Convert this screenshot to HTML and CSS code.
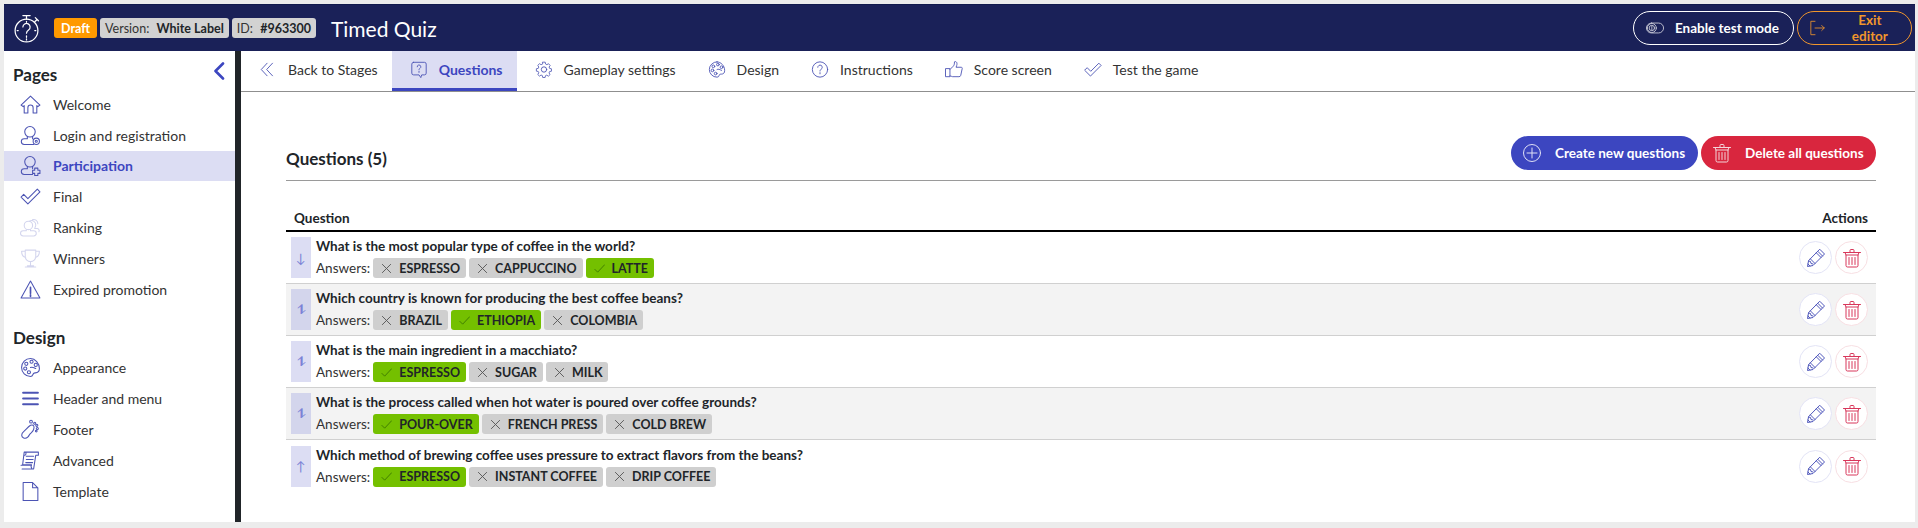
FILE: index.html
```html
<!DOCTYPE html>
<html lang="en">
<head>
<meta charset="utf-8">
<title>Timed Quiz</title>
<link rel="stylesheet" href="styles.css">
</head>
<body>
<svg class="defs" width="0" height="0" aria-hidden="true">
  <defs>
    <symbol id="i-home" viewBox="0 0 20 20"><path d="M1 10.5 10 2l9 8.5-2 1.5-1-1v7h-3.500v-5a2.500 2.500 0 0 0-5 0v5H4v-7l-1 1z"/></symbol>
    <symbol id="i-user" viewBox="0 0 20 20"><circle cx="9.500" cy="6.500" r="5"/><path d="M7 11v2H4a2.500 2.500 0 0 0 0 5.500h9M12 11v2"/><circle cx="15.500" cy="15.500" r="3"/><circle cx="15.500" cy="15.500" r="1"/></symbol>
    <symbol id="i-userp" viewBox="0 0 20 20"><circle cx="9.500" cy="6.500" r="5"/><path d="M7 11v2H4a2.500 2.500 0 0 0 0 5.500h8M12 11v2"/><path d="M14 12.500h3v2h2v3h-2v2h-3v-2h-2v-3h2z"/></symbol>
    <symbol id="i-check" viewBox="0 0 20 20"><path d="M1 10.500 3.500 8l4 4L16.500 3 19 5.500 7.500 17z"/></symbol>
    <symbol id="i-rank" viewBox="0 0 20 20"><circle cx="8" cy="8" r="4"/><path d="M6 12v1H3a2.500 2.500 0 0 0 0 5h10a2.500 2.500 0 0 0 0-5h-3v-1M9 4a4 4 0 0 1 6 4l-1 3h2a2 2 0 0 1 2 3M12 2.500a4 4 0 0 1 5 4"/></symbol>
    <symbol id="i-trophy" viewBox="0 0 20 20"><path d="M5 2h10v6a5 5 0 0 1-10 0zM5 3H1.500c0 4 1.500 5.500 4 6M15 3h3.500c0 4-1.500 5.500-4 6M10 13v4M5 18h10M7 17h6"/></symbol>
    <symbol id="i-warn" viewBox="0 0 20 20"><path d="M10 2 19 18H1z"/><path d="M10 8v5.500M10 15v1.500" stroke-width="1.600"/></symbol>
    <symbol id="i-palette" viewBox="0 0 20 20"><path d="M10 1.500a8.500 8.500 0 1 0 0 17c2.500 0 2-2 3-3s5.500 1 5.500-4.500c0-5-4-9.500-8.500-9.500z"/><circle cx="6" cy="6.500" r="1.500"/><circle cx="11" cy="4.500" r="1.500"/><circle cx="15" cy="7.500" r="1.500"/><circle cx="5" cy="11" r="1.500"/><circle cx="8.500" cy="14.500" r="1.500"/><path d="M10 10c1.500-1 3 0 5 1"/></symbol>
    <symbol id="i-foot" viewBox="0 0 20 20"><path d="M10 6c3-1 4 1 3 4s-3 3-4 5-3 4-5.500 3S1 14 3.500 12 7 8 10 6z"/><circle cx="10.500" cy="2.500" r="1.300"/><circle cx="14" cy="4" r="1"/><circle cx="16" cy="6" r="1"/><circle cx="16.500" cy="9" r="1"/><circle cx="15.500" cy="11.500" r=".8"/></symbol>
    <symbol id="i-scroll" viewBox="0 0 20 20"><path d="M4 2h13.500v3H15l-2 13H2M4 2l-1.500 12H11l-.5 2 1 2M1 14.500h9.500M5 2c1 0 1 3-.5 3M6 6h7M6 9h6.500M5.500 12h6.500"/></symbol>
    <symbol id="i-file" viewBox="0 0 20 20"><path d="M3 1.500h9l5 5v12H3zM12 1.500v5h5"/></symbol>
    <symbol id="i-bubble" viewBox="0 0 20 20"><path d="M4 2h12a2 2 0 0 1 2 2v10a2 2 0 0 1-2 2h-3l-1 3-2-3H4a2 2 0 0 1-2-2V4a2 2 0 0 1 2-2z"/><path d="M8 7a2 2 0 1 1 3 1.700c-.6.400-1 .8-1 1.600M10 12v1.200"/></symbol>
    <symbol id="i-gear" viewBox="0 0 20 20"><path d="M8.500 1.500h3l.4 2.300 1.700.8 2-1.200 2 2.200-1.300 1.900.6 1.700 2.300.5v3l-2.300.4-.7 1.700 1.300 2-2.100 2-2-1.300-1.600.7-.4 2.200h-3l-.4-2.300-1.600-.7-2 1.300-2.100-2 1.300-2-.7-1.700-2.300-.4v-3l2.300-.4.7-1.700-1.300-2 2.100-2.100 2 1.200 1.600-.7z" transform="matrix(.9 0 0 .9 1 .5)"/><circle cx="10" cy="10" r="3"/></symbol>
    <symbol id="i-q" viewBox="0 0 20 20"><circle cx="10" cy="10" r="8.500"/><path d="M7.500 7.500a2.500 2.500 0 1 1 3.800 2.200c-.8.500-1.300 1-1.300 2M10 13.500v1.300"/></symbol>
    <symbol id="i-thumb" viewBox="0 0 20 20"><path d="M1 9h4.500v9H1zM5.500 10 9 6.500c1.500-1.500 1.500-3 1.500-5 2-1 3.500 1 2.500 4l-.7 2H18c1 0 1.500 1 1 2l-1.500 7c-.2 1-1 1.500-2 1.500h-7c-1 0-2-1-3-1"/></symbol>
    <symbol id="i-pencil" viewBox="0 0 20 20"><path d="M14 1.500 18.500 6 7 17.500l-5.500 1L2.500 13zM12 3.500 16.500 8M10.500 5l4.500 4.500M4.500 11l4.500 4.500M2.500 13l2 .5.500 2 2 .5M2 16l2 2"/></symbol>
    <symbol id="i-trash" viewBox="0 0 20 20"><path d="M1.500 4.500h17M8 4.500V2.500a1 1 0 0 1 1-1h2a1 1 0 0 1 1 1v2M3 4.500 4 7v10.500a1.500 1.500 0 0 0 1.500 1.500h9a1.500 1.500 0 0 0 1.500-1.500V7l1-2.500M4 7h12M7 9.500v7M10 9.500v7M13 9.500v7" /></symbol>
    <symbol id="i-x" viewBox="0 0 12 12"><path d="M1.500 1.500l9 9M10.500 1.500l-9 9"/></symbol>
    <symbol id="i-tick" viewBox="0 0 12 12"><path d="M1 7l3 3 7.500-8"/></symbol>
  </defs>
</svg>
<div class="app">
  <header class="topbar">
    <svg class="logo" viewBox="0 0 28 28"><circle cx="14" cy="16" r="11"/><path d="M14 5V2M10.500 1.500h7M22 7.500l2-2M22.500 3.500l3 3M10.500 12.500a3.500 3.500 0 1 1 5.500 3c-1.200.8-2 1.400-2 3M14 21v1.500M14 7v1M14 24v1M5 16h1M22 16h1"/></svg>
    <span class="badge badge-draft">Draft</span>
    <span class="badge">Version: <b>White Label</b></span>
    <span class="badge">ID: <b>#963300</b></span>
    <h1 class="quiz-title">Timed Quiz</h1>
    <div class="top-actions">
      <button class="pill pill-white">
        <svg class="pill-icon" viewBox="0 0 20 12"><rect x=".5" y=".5" width="19" height="11" rx="5.500"/><circle cx="6.500" cy="6" r="5"/><circle cx="6.500" cy="6" r="3"/><path d="M6.500 4v4"/></svg>
        Enable test mode
      </button>
      <button class="pill pill-orange">
        <svg class="pill-icon" viewBox="0 0 20 18"><path d="M6 1H1v16h5M6 9h11M14 6l3 3-3 3"/></svg>
        Exit editor
      </button>
    </div>
  </header>
  <div class="workspace">
    <aside class="sidebar">
      <div class="side-head"><h2 class="side-title">Pages</h2>
        <svg class="collapse" viewBox="0 0 12 18"><path d="M10 1.500 2.500 9l7.500 7.500"/></svg>
      </div>
      <nav class="side-list">
        <a class="side-item"><svg class="ico"><use href="#i-home"/></svg>Welcome</a>
        <a class="side-item"><svg class="ico"><use href="#i-user"/></svg>Login and registration</a>
        <a class="side-item is-active"><svg class="ico"><use href="#i-userp"/></svg>Participation</a>
        <a class="side-item"><svg class="ico"><use href="#i-check"/></svg>Final</a>
        <a class="side-item"><svg class="ico ico-pale"><use href="#i-rank"/></svg>Ranking</a>
        <a class="side-item"><svg class="ico ico-pale"><use href="#i-trophy"/></svg>Winners</a>
        <a class="side-item"><svg class="ico"><use href="#i-warn"/></svg>Expired promotion</a>
      </nav>
      <div class="side-head side-head-2"><h2 class="side-title">Design</h2></div>
      <nav class="side-list">
        <a class="side-item"><svg class="ico"><use href="#i-palette"/></svg>Appearance</a>
        <a class="side-item"><svg class="ico ico-menu" viewBox="0 0 20 20"><path d="M3 4.500h14M3 10h14M3 15.500h14"/></svg>Header and menu</a>
        <a class="side-item"><svg class="ico"><use href="#i-foot"/></svg>Footer</a>
        <a class="side-item"><svg class="ico"><use href="#i-scroll"/></svg>Advanced</a>
        <a class="side-item"><svg class="ico"><use href="#i-file"/></svg>Template</a>
      </nav>
    </aside>
    <main class="main">
      <nav class="tabs">
        <a class="tab"><svg class="tab-ico" viewBox="0 0 20 20"><path d="M9 3 2.500 10 9 17M15 3l-6.500 7 6.500 7"/></svg>Back to Stages</a>
        <a class="tab is-active"><svg class="tab-ico"><use href="#i-bubble"/></svg>Questions</a>
        <a class="tab"><svg class="tab-ico"><use href="#i-gear"/></svg>Gameplay settings</a>
        <a class="tab"><svg class="tab-ico"><use href="#i-palette"/></svg>Design</a>
        <a class="tab"><svg class="tab-ico"><use href="#i-q"/></svg>Instructions</a>
        <a class="tab"><svg class="tab-ico"><use href="#i-thumb"/></svg>Score screen</a>
        <a class="tab"><svg class="tab-ico"><use href="#i-check"/></svg>Test the game</a>
      </nav>
      <section class="content">
        <div class="content-head">
          <h2 class="content-title">Questions (5)</h2>
          <div class="content-actions">
            <button class="fill fill-blue"><svg class="fill-ico" viewBox="0 0 20 20"><circle cx="10" cy="10" r="8.500"/><path d="M10 5v10M5 10h10"/></svg>Create new questions</button>
            <button class="fill fill-red"><svg class="fill-ico"><use href="#i-trash"/></svg>Delete all questions</button>
          </div>
        </div>
        <div class="thead"><span>Question</span><span>Actions</span></div>
        <div class="row">
          <span class="handle">↓</span>
          <div class="q"><div class="q-text">What is the most popular type of coffee in the world?</div>
            <div class="answers">Answers:
              <span class="tag"><svg class="tag-ico"><use href="#i-x"/></svg>ESPRESSO</span>
              <span class="tag"><svg class="tag-ico"><use href="#i-x"/></svg>CAPPUCCINO</span>
              <span class="tag tag-ok"><svg class="tag-ico"><use href="#i-tick"/></svg>LATTE</span>
            </div></div>
          <div class="acts"><button class="round"><svg><use href="#i-pencil"/></svg></button><button class="round round-red"><svg><use href="#i-trash"/></svg></button></div>
        </div>
        <div class="row row-alt">
          <span class="handle">⥮</span>
          <div class="q"><div class="q-text">Which country is known for producing the best coffee beans?</div>
            <div class="answers">Answers:
              <span class="tag"><svg class="tag-ico"><use href="#i-x"/></svg>BRAZIL</span>
              <span class="tag tag-ok"><svg class="tag-ico"><use href="#i-tick"/></svg>ETHIOPIA</span>
              <span class="tag"><svg class="tag-ico"><use href="#i-x"/></svg>COLOMBIA</span>
            </div></div>
          <div class="acts"><button class="round"><svg><use href="#i-pencil"/></svg></button><button class="round round-red"><svg><use href="#i-trash"/></svg></button></div>
        </div>
        <div class="row">
          <span class="handle">⥮</span>
          <div class="q"><div class="q-text">What is the main ingredient in a macchiato?</div>
            <div class="answers">Answers:
              <span class="tag tag-ok"><svg class="tag-ico"><use href="#i-tick"/></svg>ESPRESSO</span>
              <span class="tag"><svg class="tag-ico"><use href="#i-x"/></svg>SUGAR</span>
              <span class="tag"><svg class="tag-ico"><use href="#i-x"/></svg>MILK</span>
            </div></div>
          <div class="acts"><button class="round"><svg><use href="#i-pencil"/></svg></button><button class="round round-red"><svg><use href="#i-trash"/></svg></button></div>
        </div>
        <div class="row row-alt">
          <span class="handle">⥮</span>
          <div class="q"><div class="q-text">What is the process called when hot water is poured over coffee grounds?</div>
            <div class="answers">Answers:
              <span class="tag tag-ok"><svg class="tag-ico"><use href="#i-tick"/></svg>POUR-OVER</span>
              <span class="tag"><svg class="tag-ico"><use href="#i-x"/></svg>FRENCH PRESS</span>
              <span class="tag"><svg class="tag-ico"><use href="#i-x"/></svg>COLD BREW</span>
            </div></div>
          <div class="acts"><button class="round"><svg><use href="#i-pencil"/></svg></button><button class="round round-red"><svg><use href="#i-trash"/></svg></button></div>
        </div>
        <div class="row row-last">
          <span class="handle">↑</span>
          <div class="q"><div class="q-text">Which method of brewing coffee uses pressure to extract flavors from the beans?</div>
            <div class="answers">Answers:
              <span class="tag tag-ok"><svg class="tag-ico"><use href="#i-tick"/></svg>ESPRESSO</span>
              <span class="tag"><svg class="tag-ico"><use href="#i-x"/></svg>INSTANT COFFEE</span>
              <span class="tag"><svg class="tag-ico"><use href="#i-x"/></svg>DRIP COFFEE</span>
            </div></div>
          <div class="acts"><button class="round"><svg><use href="#i-pencil"/></svg></button><button class="round round-red"><svg><use href="#i-trash"/></svg></button></div>
        </div>
      </section>
    </main>
  </div>
</div>
</body>
</html>
```

FILE: styles.css
```css
* { box-sizing: border-box; }
html, body { margin: 0; height: 100%; }
body {
  background: #ececec;
  padding: 4px 3px 6px 4px;
  font-family: Lato, "Noto Sans", sans-serif;
  font-size: 14px;
  color: #212529;
  overflow: hidden;
}
.defs { position: absolute; }
svg { fill: none; stroke-linecap: round; stroke-linejoin: round; }
.app { display: flex; flex-direction: column; height: 518px; background: #fff; }

.topbar {
  height: 47px; flex: none;
  display: flex; align-items: center;
  background: #1a2158;
  padding: 0 3px 0 8px;
  border-top: 1px solid #111a4d;
}
.logo { width: 29px; height: 29px; stroke: #fff; stroke-width: 1.200; margin-right: 13px; }
.badge {
  height: 20px; display: inline-flex; align-items: center;
  padding: 0 5px; margin-right: 3px;
  background: #d2d2d2; color: #333; border-radius: 3px;
  font-size: 12.500px; white-space: pre;
}
.badge b { color: #212529; margin-left: 4px; }
.badge-draft { background: #ff9900; color: #fff; font-weight: 700; padding: 0 7px; }
.quiz-title { margin: 0 0 0 12px; font-size: 21px; font-weight: 400; color: #fff; }
.top-actions { margin-left: auto; display: flex; gap: 3px; }
.pill {
  height: 34px; display: inline-flex; align-items: center; gap: 11px;
  padding: 0 12px; background: none; border-radius: 17px;
  font: 700 13.500px Lato, sans-serif;
}
.pill-white { color: #fff; border: 1px solid #fff; width: 161px; }
.pill-orange { color: #f0962c; border: 1px solid #f0962c; width: 115px; gap: 14px; }
.pill-icon { width: 18px; height: 14px; stroke: currentColor; stroke-width: 1; }
.pill-white .pill-icon { stroke: #c9cbd8; }
.pill-orange .pill-icon { height: 18px; }

.workspace { flex: 1; display: flex; min-height: 0; }
.sidebar { width: 237px; flex: none; border-right: 6px solid #212529; padding-top: 9px; }
.side-head { display: flex; justify-content: space-between; align-items: center; padding: 0 10px 0 9px; height: 28px; }
.side-head-2 { margin-top: 19px; margin-bottom: 0; }
.side-title { margin: 0; font-size: 17px; font-weight: 700; color: #212529; }
.collapse { width: 12px; height: 18px; stroke: #3c46c0; stroke-width: 2.600; margin-top: -6px; }
.side-list { display: flex; flex-direction: column; margin-top: 1px; }
.side-item { height: 30.800px; display: flex; align-items: center; padding-left: 16px; gap: 12px; color: #333; font-size: 14px; }
.side-item.is-active { background: #dcddf3; color: #3c46c0; font-weight: 700; }
.ico { width: 21px; height: 21px; stroke: #4c54b4; stroke-width: 1; flex: none; }
.ico-pale { stroke: #d3d5ee; }
.ico-menu { stroke-width: 2; stroke: #4c54b4; }

.main { flex: 1; min-width: 0; display: flex; flex-direction: column; }
.tabs { height: 41px; flex: none; display: flex; border-bottom: 1px solid #8f8f8f; padding-left: 0; }
.tab { display: flex; align-items: center; gap: 11px; padding: 0 14px 4px 18px; font-size: 14px; color: #333; white-space: nowrap; }
.tab.is-active { background: #dcddf3; color: #3c46c0; font-weight: 700; border-bottom: 3px solid #3c46c0; padding-bottom: 1px; }
.tab-ico { width: 18px; height: 19px; stroke: #4c54b4; stroke-width: 1; flex: none; }

.content { padding: 0 39px 0 45px; flex: 1; }
.content-head { height: 89px; border-bottom: 1px solid #9a9a9a; display: flex; justify-content: space-between; align-items: flex-end; padding-bottom: 10px; }
.content-title { margin: 0 0 1px; font-size: 17px; font-weight: 700; color: #212529; }
.content-actions { display: flex; gap: 3px; }
.fill { height: 34px; display: inline-flex; align-items: center; gap: 13px; padding: 0 11px; border: 0; border-radius: 17px; color: #fff; font: 700 13.500px Lato, sans-serif; }
.fill-blue { background: #3c46c0; width: 187px; }
.fill-red { background: #d9263e; width: 175px; }
.fill-ico { width: 20px; height: 20px; stroke: #f3d6da; stroke-width: 1; }
.fill-blue .fill-ico { stroke: #dfe0f5; }

.thead { height: 51px; display: flex; justify-content: space-between; align-items: flex-end; padding: 0 8px 4px; font-weight: 700; font-size: 13.500px; border-bottom: 2px solid #000; color: #212529; }
.row { height: 52px; display: flex; align-items: center; padding: 0 8px 0 5px; border-bottom: 1px solid #d0d0d0; }
.row-alt { background: #f3f3f3; }
.row-last { border-bottom: 0; }
.handle { width: 20px; height: 41px; background: #dcddf3; color: #7b82d6; display: flex; align-items: center; justify-content: center; font-size: 13px; flex: none; margin-right: 5px; }
.row-alt .handle { background: #d3d5ec; }
.q { flex: 1; min-width: 0; }
.q-text { font-weight: 700; font-size: 13.500px; color: #212529; line-height: 18px; margin-bottom: 3px; }
.answers { display: flex; align-items: center; gap: 3px; font-size: 13.500px; color: #333; }
.answers .tag:first-child { margin-left: 0; }
.tag { height: 20px; display: inline-flex; align-items: center; gap: 7px; padding: 0 6px 0 8px; background: #cfcfcf; border-radius: 3px; font-size: 12.500px; font-weight: 700; color: #212529; }
.tag:nth-of-type(1) { margin-left: 7px; }
.tag-ok { background: #74c000; }
.tag-ico { width: 11px; height: 11px; stroke: #555; stroke-width: 1; }
.tag-ok .tag-ico { stroke: #3d7a00; }
.acts { display: flex; gap: 3px; }
.round { width: 33px; height: 33px; padding: 0; border: 1px solid #e3e4f6; border-radius: 50%; background: #fff; display: flex; align-items: center; justify-content: center; }
.round svg { width: 20px; height: 20px; stroke: #5058bc; stroke-width: 1; }
.round-red { border-color: #f8dfe3; }
.round-red svg { stroke: #d8365a; }
```
